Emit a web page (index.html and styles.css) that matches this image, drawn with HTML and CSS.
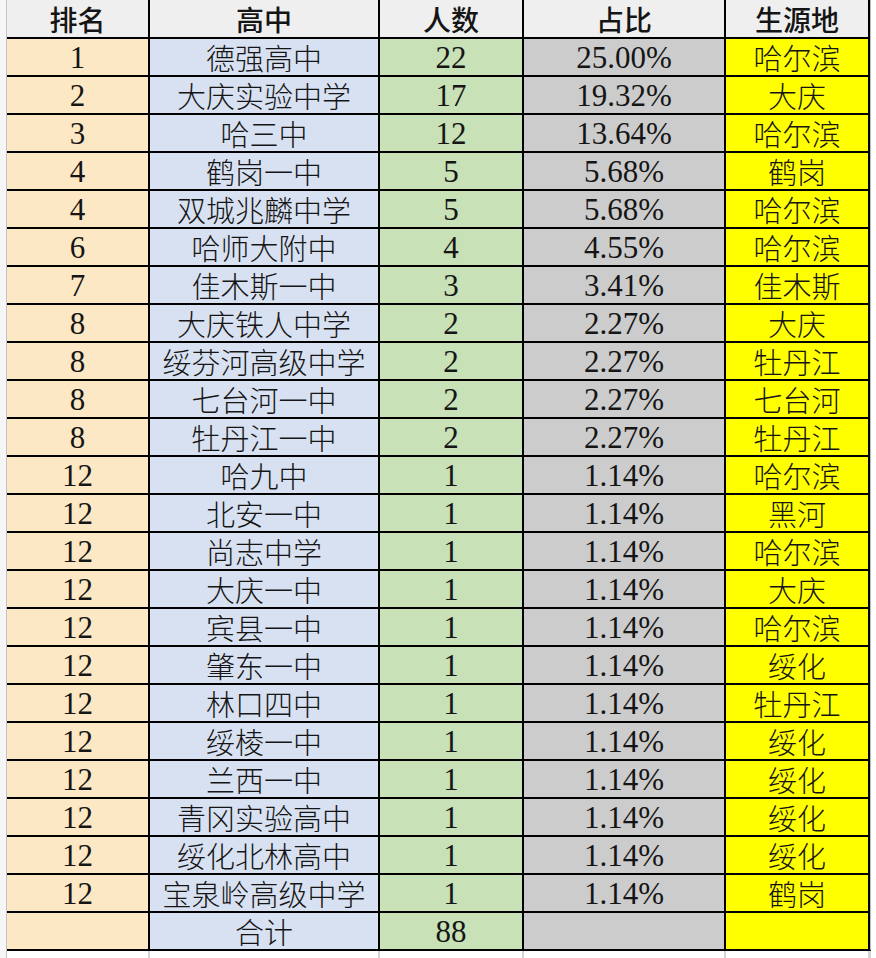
FILE: index.html
```html
<!DOCTYPE html>
<html lang="zh-CN">
<head>
<meta charset="utf-8">
<title>生源统计</title>
<link rel="stylesheet" href="styles.css">
</head>
<body>
<div class="page">
  <div class="gutter"></div>
  <div class="main">
    <div class="sheet">
      <div class="c hd">排名</div><div class="c hd">高中</div><div class="c hd">人数</div><div class="c hd">占比</div><div class="c hd">生源地</div>

      <div class="c rk num">1</div><div class="c nm">德强高中</div><div class="c ct num">22</div><div class="c pc num">25.00%</div><div class="c yl">哈尔滨</div>
      <div class="c rk num">2</div><div class="c nm">大庆实验中学</div><div class="c ct num">17</div><div class="c pc num">19.32%</div><div class="c yl">大庆</div>
      <div class="c rk num">3</div><div class="c nm">哈三中</div><div class="c ct num">12</div><div class="c pc num">13.64%</div><div class="c yl">哈尔滨</div>
      <div class="c rk num">4</div><div class="c nm">鹤岗一中</div><div class="c ct num">5</div><div class="c pc num">5.68%</div><div class="c yl">鹤岗</div>
      <div class="c rk num">4</div><div class="c nm">双城兆麟中学</div><div class="c ct num">5</div><div class="c pc num">5.68%</div><div class="c yl">哈尔滨</div>
      <div class="c rk num">6</div><div class="c nm">哈师大附中</div><div class="c ct num">4</div><div class="c pc num">4.55%</div><div class="c yl">哈尔滨</div>
      <div class="c rk num">7</div><div class="c nm">佳木斯一中</div><div class="c ct num">3</div><div class="c pc num">3.41%</div><div class="c yl">佳木斯</div>
      <div class="c rk num">8</div><div class="c nm">大庆铁人中学</div><div class="c ct num">2</div><div class="c pc num">2.27%</div><div class="c yl">大庆</div>
      <div class="c rk num">8</div><div class="c nm">绥芬河高级中学</div><div class="c ct num">2</div><div class="c pc num">2.27%</div><div class="c yl">牡丹江</div>
      <div class="c rk num">8</div><div class="c nm">七台河一中</div><div class="c ct num">2</div><div class="c pc num">2.27%</div><div class="c yl">七台河</div>
      <div class="c rk num">8</div><div class="c nm">牡丹江一中</div><div class="c ct num">2</div><div class="c pc num">2.27%</div><div class="c yl">牡丹江</div>
      <div class="c rk num">12</div><div class="c nm">哈九中</div><div class="c ct num">1</div><div class="c pc num">1.14%</div><div class="c yl">哈尔滨</div>
      <div class="c rk num">12</div><div class="c nm">北安一中</div><div class="c ct num">1</div><div class="c pc num">1.14%</div><div class="c yl">黑河</div>
      <div class="c rk num">12</div><div class="c nm">尚志中学</div><div class="c ct num">1</div><div class="c pc num">1.14%</div><div class="c yl">哈尔滨</div>
      <div class="c rk num">12</div><div class="c nm">大庆一中</div><div class="c ct num">1</div><div class="c pc num">1.14%</div><div class="c yl">大庆</div>
      <div class="c rk num">12</div><div class="c nm">宾县一中</div><div class="c ct num">1</div><div class="c pc num">1.14%</div><div class="c yl">哈尔滨</div>
      <div class="c rk num">12</div><div class="c nm">肇东一中</div><div class="c ct num">1</div><div class="c pc num">1.14%</div><div class="c yl">绥化</div>
      <div class="c rk num">12</div><div class="c nm">林口四中</div><div class="c ct num">1</div><div class="c pc num">1.14%</div><div class="c yl">牡丹江</div>
      <div class="c rk num">12</div><div class="c nm">绥棱一中</div><div class="c ct num">1</div><div class="c pc num">1.14%</div><div class="c yl">绥化</div>
      <div class="c rk num">12</div><div class="c nm">兰西一中</div><div class="c ct num">1</div><div class="c pc num">1.14%</div><div class="c yl">绥化</div>
      <div class="c rk num">12</div><div class="c nm">青冈实验高中</div><div class="c ct num">1</div><div class="c pc num">1.14%</div><div class="c yl">绥化</div>
      <div class="c rk num">12</div><div class="c nm">绥化北林高中</div><div class="c ct num">1</div><div class="c pc num">1.14%</div><div class="c yl">绥化</div>
      <div class="c rk num">12</div><div class="c nm">宝泉岭高级中学</div><div class="c ct num">1</div><div class="c pc num">1.14%</div><div class="c yl">鹤岗</div>
      <div class="c rk num"></div><div class="c nm">合计</div><div class="c ct num">88</div><div class="c pc num"></div><div class="c yl"></div>
    </div>
    <div class="tail">
      <div class="t"></div><div class="t"></div><div class="t"></div><div class="t"></div><div class="t"></div>
    </div>
  </div>
</div>
</body>
</html>
```
FILE: styles.css
```css
html, body {
  margin: 0;
  padding: 0;
  background: #ffffff;
}
body {
  width: 876px;
  height: 958px;
  overflow: hidden;
  color: #151515;
  font-family: "Noto Sans CJK SC", "Noto Sans", sans-serif;
}
.page {
  display: flex;
  height: 958px;
}
.gutter {
  width: 6px;
  background: #f6f6f6;
  border-right: 1px solid #c4c4c4;
}
.main {
  width: 864px;
  display: flex;
  flex-direction: column;
}
.sheet {
  display: grid;
  grid-template-columns: 141px 228px 142px 200px 142px;
  grid-template-rows: 37px repeat(24, 36px);
  column-gap: 2px;
  row-gap: 2px;
  background: #000;
  border-right: 1px solid #b8bcc8;
  border-bottom: 2px solid #000;
}
.c {
  display: flex;
  align-items: center;
  justify-content: center;
  font-size: 29px;
  font-weight: 300;
  line-height: 32px;
  white-space: nowrap;
}
.num {
  font-family: "Liberation Serif", "Times New Roman", serif;
  font-size: 31px;
  font-weight: 400;
  padding-top: 2px;
}
.hd {
  background: #efefef;
  font-size: 28px;
  font-weight: 500;
}
.rk { background: #fce8c4; }
.nm { background: #d8e1f1; }
.ct { background: #c8e1b6; }
.pc { background: #cccccc; }
.yl { background: #ffff00; }
.tail {
  flex: 1;
  display: grid;
  grid-template-columns: 141px 228px 142px 200px 142px;
  column-gap: 2px;
  background: #d4d4d4;
  border-right: 1px solid #d4d4d4;
}
.t {
  background: #ffffff;
}
```
